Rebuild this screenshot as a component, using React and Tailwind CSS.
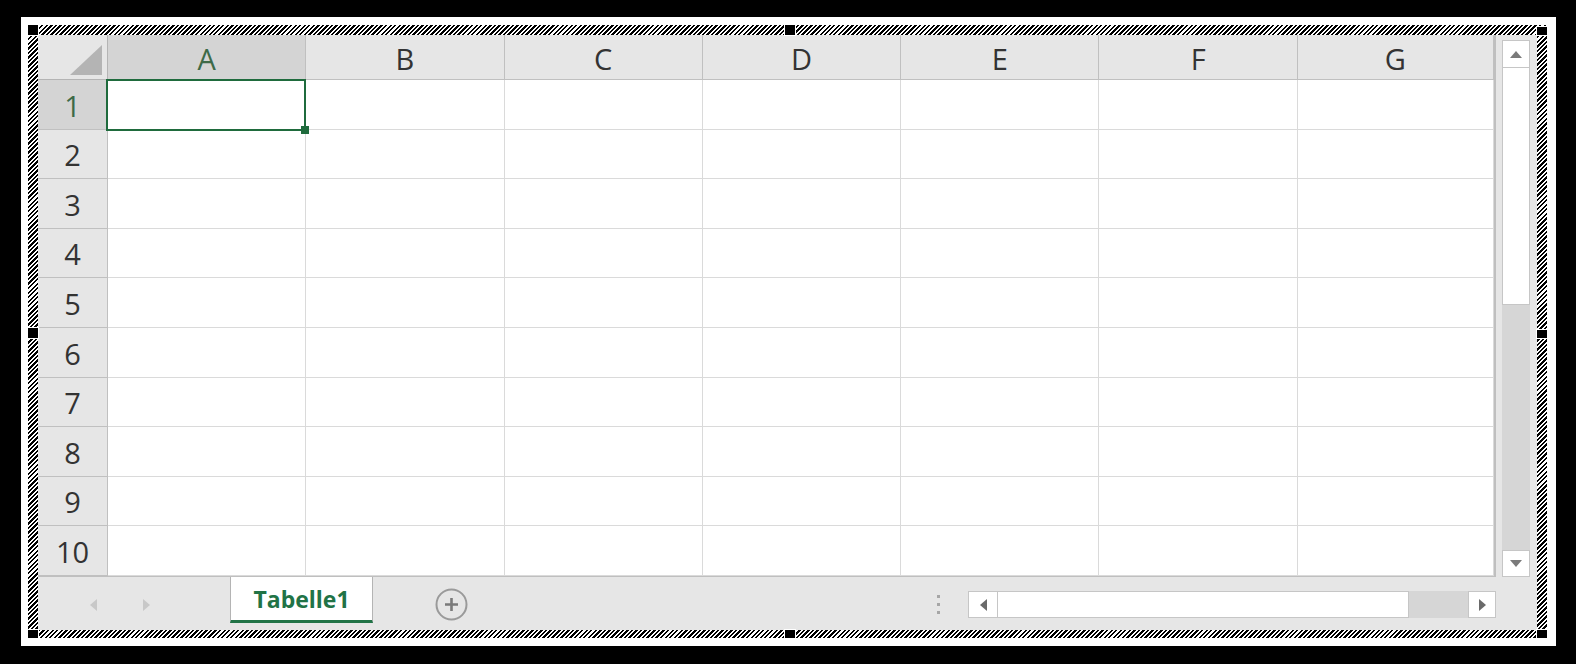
const columns = ["A", "B", "C", "D", "E", "F", "G"];
const rows = [1, 2, 3, 4, 5, 6, 7, 8, 9, 10];

// black handles sitting on the hatched selection frame
const Handle = ({ className }) => (
    <div className={`absolute bg-black outline outline-1 outline-white ${className}`} />
);

const VerticalScrollbar = () => (
    <div className="w-[41px] h-full bg-[#e6e6e6] pl-[6px] pr-[7px] pt-[5px]">
        <div className="flex flex-col h-full bg-[#d6d6d6]">
            <div className="h-[28px] bg-white border border-[#c6c6c6] flex items-center justify-center">
                <svg width="12" height="7" viewBox="0 0 12 7">
                    <polygon points="6,0 12,7 0,7" fill="#7a7a7a" />
                </svg>
            </div>
            <div className="h-[237px] bg-white border-x border-b border-[#c6c6c6]" />
            <div className="flex-1" />
            <div className="h-[27px] bg-white border border-[#c6c6c6] flex items-center justify-center">
                <svg width="12" height="7" viewBox="0 0 12 7">
                    <polygon points="0,0 12,0 6,7" fill="#7a7a7a" />
                </svg>
            </div>
        </div>
    </div>
);

const Sheet = () => (
    <div className="flex-1 h-full grid grid-cols-[70px_repeat(6,198.3px)_1fr] grid-rows-[45px_repeat(10,1fr)] bg-white border-r-[2px] border-b border-[#bfbfbf]">
        {/* corner cell */}
        <div className="relative bg-[#e6e6e6] border-r border-b border-[#b4b4b4]">
            <svg className="absolute right-[5px] bottom-[4px]" width="32" height="30" viewBox="0 0 32 30">
                <polygon points="32,0 32,30 0,30" fill="#b4b4b4" />
            </svg>
        </div>
        {columns.map((c) => (
            <div
                key={c}
                className={`flex items-center justify-center pt-[3px] text-[29px] border-r border-b border-[#c0c0c0] ${
                    c === "A" ? "bg-[#d4d4d4] text-[#3d6a48]" : "bg-[#e6e6e6] text-[#333333]"
                }`}
            >
                {c}
            </div>
        ))}
        {rows.map((r) => [
            <div
                key={`h${r}`}
                className={`flex items-center justify-center pt-[2px] text-[29px] border-r border-b border-[#c0c0c0] ${
                    r === 1 ? "bg-[#d4d4d4] text-[#3d6a48]" : "bg-[#e6e6e6] text-[#333333]"
                }`}
            >
                {r}
            </div>,
            ...columns.map((c) => (
                <div
                    key={`${c}${r}`}
                    className={`relative border-r border-b border-[#dadada] ${c === "A" && r === 1 ? "z-10" : ""}`}
                >
                    {c === "A" && r === 1 && (
                        <>
                            <div className="absolute -left-[2px] -top-[1px] -right-[1px] -bottom-[2px] border-2 border-[#1f6b3d]" />
                            <div className="absolute -right-[4px] -bottom-[5px] w-[8px] h-[8px] bg-[#1f6b3d]" />
                        </>
                    )}
                </div>
            )),
        ])}
    </div>
);

const TabBar = () => (
    <div className="h-[53px] flex items-start bg-[#e6e6e6]">
        <div className="w-[192px] h-full flex items-center pl-[52px] pt-[2px]">
            <svg width="7" height="12" viewBox="0 0 7 12">
                <polygon points="7,0 7,12 0,6" fill="#c8c8c8" />
            </svg>
            <svg className="ml-[46px]" width="7" height="12" viewBox="0 0 7 12">
                <polygon points="0,0 7,6 0,12" fill="#c8c8c8" />
            </svg>
        </div>
        <div className="w-[143px] h-[46px] bg-white border-x border-[#b4b4b4] border-b-[3px] border-b-[#217346] flex items-center justify-center pt-[2px]">
            <span className="text-[23px] font-bold text-[#217346]">Tabelle1</span>
        </div>
        <div className="h-full flex items-center ml-[62px] pt-[2px]">
            <svg width="33" height="33" viewBox="0 0 33 33">
                <circle cx="16.5" cy="16.5" r="15" fill="none" stroke="#9a9a9a" strokeWidth="2" />
                <path d="M16.5 10 V23 M10 16.5 H23" stroke="#7a7a7a" strokeWidth="2.6" />
            </svg>
        </div>
        <div className="h-full flex items-center ml-[469px] pt-[2px]">
            <div className="flex flex-col gap-[5px]">
                <div className="w-[3px] h-[3px] bg-[#a6a6a6]" />
                <div className="w-[3px] h-[3px] bg-[#a6a6a6]" />
                <div className="w-[3px] h-[3px] bg-[#a6a6a6]" />
            </div>
        </div>
        <div className="h-full flex items-center ml-[28px] pt-[2px]">
            <div className="flex h-[27px] w-[528px] bg-[#d6d6d6]">
                <div className="w-[30px] bg-white border border-[#c6c6c6] flex items-center justify-center">
                    <svg width="7" height="12" viewBox="0 0 7 12">
                        <polygon points="7,0 7,12 0,6" fill="#6a6a6a" />
                    </svg>
                </div>
                <div className="w-[411px] bg-white border-y border-r border-[#c6c6c6]" />
                <div className="flex-1" />
                <div className="w-[28px] bg-white border border-[#c6c6c6] flex items-center justify-center">
                    <svg width="7" height="12" viewBox="0 0 7 12">
                        <polygon points="0,0 7,6 0,12" fill="#6a6a6a" />
                    </svg>
                </div>
            </div>
        </div>
    </div>
);

export default function App() {
    return (
        <div className="w-[1576px] h-[664px] bg-black pl-[21px] pt-[17px] font-['Open_Sans',sans-serif]">
            <div className="w-[1535px] h-[629px] bg-white pl-[7px] pt-[8px]">
                <div className="relative w-[1519px] h-[613px] pt-[10px] px-[10px] pb-[8px] bg-[repeating-linear-gradient(135deg,#000_0px,#000_1.7px,#fff_1.7px,#fff_3.2px)]">
                    <div className="flex flex-col h-full">
                        <div className="flex h-[542px]">
                            <Sheet />
                            <VerticalScrollbar />
                        </div>
                        <TabBar />
                    </div>
                    <Handle className="left-0 top-0 w-[10px] h-[10px]" />
                    <Handle className="left-[757px] top-0 w-[10px] h-[10px]" />
                    <Handle className="right-0 top-[2px] w-[10px] h-[8px]" />
                    <Handle className="left-0 top-[303px] w-[10px] h-[10px]" />
                    <Handle className="right-0 top-[305px] w-[10px] h-[8px]" />
                    <Handle className="left-0 bottom-0 w-[10px] h-[8px]" />
                    <Handle className="left-[757px] bottom-0 w-[10px] h-[8px]" />
                    <Handle className="right-0 bottom-0 w-[10px] h-[8px]" />
                </div>
            </div>
        </div>
    );
}
